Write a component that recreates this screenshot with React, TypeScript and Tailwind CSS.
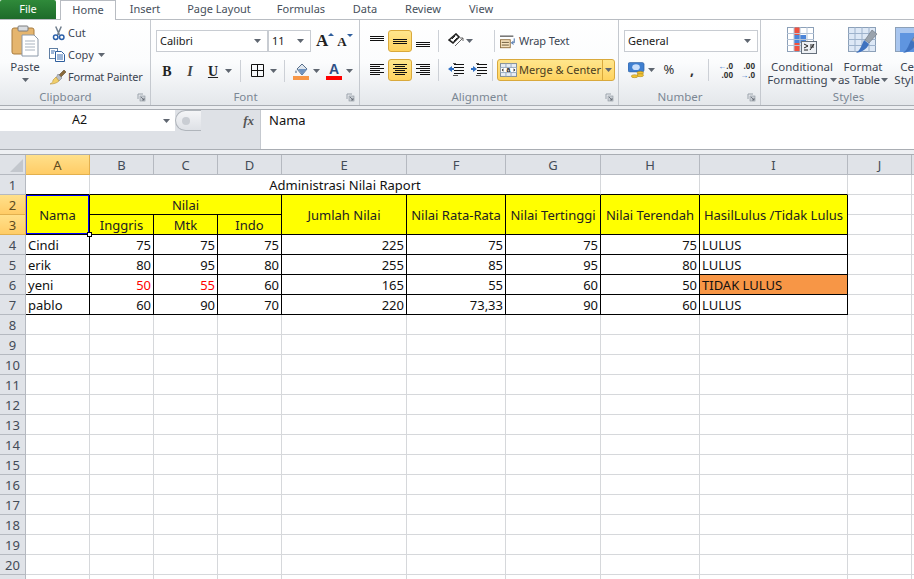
import type { ReactNode } from 'react';

const tabs = [
  { label: 'Insert', w: 'w-[58px]' },
  { label: 'Page Layout', w: 'w-[90px]' },
  { label: 'Formulas', w: 'w-[74px]' },
  { label: 'Data', w: 'w-[54px]' },
  { label: 'Review', w: 'w-[62px]' },
  { label: 'View', w: 'w-[54px]' },
];

const colHeaders = [
  { label: 'A', active: true },
  { label: 'B' },
  { label: 'C' },
  { label: 'D' },
  { label: 'E' },
  { label: 'F' },
  { label: 'G' },
  { label: 'H' },
  { label: 'I' },
  { label: 'J' },
  { label: '' },
];

const students = [
  { n: 4, name: 'Cindi', b: '75', c: '75', d: '75', e: '225', f: '75', g: '75', h: '75', i: 'LULUS' },
  { n: 5, name: 'erik', b: '80', c: '95', d: '80', e: '255', f: '85', g: '95', h: '80', i: 'LULUS' },
  { n: 6, name: 'yeni', b: '50', c: '55', d: '60', e: '165', f: '55', g: '60', h: '50', i: 'TIDAK LULUS', fail: true },
  { n: 7, name: 'pablo', b: '60', c: '90', d: '70', e: '220', f: '73,33', g: '90', h: '60', i: 'LULUS' },
];

const emptyRows = [8, 9, 10, 11, 12, 13, 14, 15, 16, 17, 18, 19, 20, 21];
const emptyCols = [0, 1, 2, 3, 4, 5, 6, 7, 8, 9, 10];

const Caret = ({ className = '' }: { className?: string }) => (
  <svg width="7" height="4" viewBox="0 0 7 4" className={`shrink-0 ${className}`}>
    <path d="M0 0h7L3.5 4z" fill="#5f6670" />
  </svg>
);

const Launcher = () => (
  <svg width="9" height="9" viewBox="0 0 9 9" className="absolute right-[4px] bottom-[3px]">
    <path d="M1 1h5M1 1v5" stroke="#9aa2ab" fill="none" />
    <rect x="3" y="3" width="5" height="5" fill="#c9ced4" stroke="#8b939c" strokeWidth="0.6" />
    <path d="M4 4l3 3M7 5v2H5" stroke="#5f6670" fill="none" strokeWidth="0.8" />
  </svg>
);

const Sep = () => <div className="w-px h-[22px] bg-[#ccd0d6] shrink-0" />;

const Group = ({ label, w, children }: { label: string; w: string; children: ReactNode }) => (
  <div className={`relative shrink-0 h-full flex flex-col border-r border-[#c5c9cf] ${w}`}>
    <div className="flex-1 min-h-0">{children}</div>
    <div
      className={`h-[15px] text-center text-[11.5px] leading-[14px] text-[#7b8794] ${
        label === 'Styles' ? 'pl-[22px]' : 'pr-[19px]'
      }`}
    >
      {label}
    </div>
    {label !== 'Styles' ? <Launcher /> : null}
  </div>
);

const Combo = ({ w, label }: { w: string; label: string }) => (
  <div className={`h-[22px] bg-white border border-[#c8ccd2] flex items-center justify-between pl-[3px] pr-[6px] text-[11px] text-[#1a1a1a] ${w}`}>
    <span>{label}</span>
    <Caret />
  </div>
);

type Align = 'top' | 'mid' | 'bot' | 'left' | 'center' | 'right';

const Lines = ({ kind }: { kind: Align }) => {
  if (kind === 'top' || kind === 'mid' || kind === 'bot') {
    const y = kind === 'top' ? 2 : kind === 'mid' ? 5 : 8;
    return (
      <svg width="15" height="14" viewBox="0 0 15 14">
        <path d={`M0 ${y + 0.5}h14M0 ${y + 2.5}h14M0 ${y + 4.5}h14`} stroke="#111" fill="none" />
      </svg>
    );
  }
  const d =
    kind === 'left'
      ? 'M0 1.5h14M0 3.5h10M0 5.5h14M0 7.5h10M0 9.5h14M0 11.5h10'
      : kind === 'center'
        ? 'M0 1.5h14M2 3.5h10M0 5.5h14M2 7.5h10M0 9.5h14M2 11.5h10'
        : 'M0 1.5h14M4 3.5h10M0 5.5h14M4 7.5h10M0 9.5h14M4 11.5h10';
  return (
    <svg width="15" height="14" viewBox="0 0 15 14">
      <path d={d} stroke="#111" fill="none" />
    </svg>
  );
};

const AlignBtn = ({ kind, on }: { kind: Align; on?: boolean }) => (
  <div
    className={`h-[22px] flex items-center justify-center rounded-[3px] ${
      on ? 'w-[24px] bg-gradient-to-b from-[#ffe68c] to-[#ffd35f] border border-[#d9a93c]' : 'w-[22px]'
    }`}
  >
    <Lines kind={kind} />
  </div>
);

const ClipboardIcon = () => (
  <svg width="28" height="32" viewBox="0 0 28 32">
    <rect x="1" y="3" width="22" height="26" rx="2" fill="#e5b56e" stroke="#a97c3e" />
    <rect x="7" y="1" width="10" height="5" rx="1" fill="#d9dce0" stroke="#7d7d7d" />
    <path d="M11 10h12l4 4v17H11z" fill="#fff" stroke="#8b98a8" />
    <path d="M14 16h10M14 19h10M14 22h10M14 25h10" stroke="#a9b3bf" />
  </svg>
);

const ScissorsIcon = () => (
  <svg width="13" height="16" viewBox="0 0 14 16">
    <path d="M4 1l4 9M10 1L6 10" stroke="#6f7d8c" strokeWidth="1.6" fill="none" />
    <circle cx="4" cy="12.5" r="2.4" fill="none" stroke="#2a5fa8" strokeWidth="1.6" />
    <circle cx="10.5" cy="12.5" r="2.4" fill="none" stroke="#2a5fa8" strokeWidth="1.6" />
  </svg>
);

const CopyIcon = () => (
  <svg width="16" height="14" viewBox="0 0 16 14">
    <rect x="0.5" y="0.5" width="8" height="10" fill="#fff" stroke="#5f7ea3" />
    <path d="M6.5 3.5h6l3 3v7h-9z" fill="#fff" stroke="#2f5f9e" />
    <path d="M8 7h6M8 9h6M8 11h6M2 3h4M2 5h3" stroke="#3a6cb0" />
  </svg>
);

const BrushIcon = () => (
  <svg width="18" height="16" viewBox="0 0 18 16">
    <path d="M10 6l5-5 2 2-5 5z" fill="#8a6a3a" stroke="#5b4a2e" strokeWidth="0.6" />
    <path d="M9 5l4 4-3 3-3-3z" fill="#b9bec5" stroke="#7b8088" strokeWidth="0.6" />
    <path d="M7 8l3 4c-2 2-5 3-9 3 2-1 3-2 3-4z" fill="#f1cf6a" stroke="#b8923a" strokeWidth="0.6" />
  </svg>
);

const BorderIcon = () => (
  <svg width="14" height="14" viewBox="0 0 14 14">
    <path d="M.5.5h12v12H.5zM6.5.5v12M.5 6.5h12" fill="none" stroke="#111" />
  </svg>
);

const FillIcon = () => (
  <svg width="16" height="17" viewBox="0 0 16 17">
    <path d="M4 6l5-5 5 5-5 6z" fill="#dfe6ee" stroke="#58708c" />
    <path d="M5 6h9l-5 6z" fill="#6f93c0" />
    <path d="M3 7c-1 2-1 3 0 3s1-1 0-3z" fill="#58708c" />
    <rect x="0" y="13" width="16" height="4" fill="#f79646" />
  </svg>
);

const OrientIcon = () => (
  <svg width="17" height="16" viewBox="0 0 17 16">
    <path d="M1 7l7-6 3 3-6 6z" fill="none" stroke="#222" strokeWidth="1.6" />
    <path d="M4 6l3-3M6 8l3-3" stroke="#222" />
    <path d="M7 13l8-8M12 5h3v3" stroke="#666" fill="none" />
  </svg>
);

const IndentIcon = ({ dir }: { dir: 'dec' | 'inc' }) => (
  <svg width="16" height="14" viewBox="0 0 16 14">
    <path d="M6 1.5h10M6 4.5h10M6 7.5h10M6 10.5h10" stroke="#111" />
    <path d="M5 12.5h5M5 0.5h3" stroke="#555" />
    {dir === 'dec' ? (
      <path d="M0 6l4-3v2h2v2H4v2z" fill="#2f6fc4" />
    ) : (
      <path d="M6 6L2 3v2H0v2h2v2z" fill="#2f6fc4" />
    )}
  </svg>
);

const WrapIcon = () => (
  <svg width="16" height="15" viewBox="0 0 18 15">
    <rect x="0.5" y="5.5" width="11" height="9" fill="#f7e3bf" stroke="#8a6a3a" />
    <path d="M2 8.5h8M2 11.5h8" stroke="#5b4a2e" />
    <path d="M0 1.5h15" stroke="#555" strokeWidth="1.4" />
    <path d="M16 4v5h-3M15 7l-2 2 2 2" stroke="#2f5f9e" fill="none" />
  </svg>
);

const MergeIcon = () => (
  <svg width="17" height="16" viewBox="0 0 20 16">
    <rect x="0.5" y="0.5" width="19" height="15" fill="#e8eef5" stroke="#6f8096" />
    <rect x="1" y="5" width="18" height="6" fill="#fff" />
    <path d="M0 5h20M0 11h20M7 0v5M13 0v5M7 11v5M13 11v5" stroke="#8ca0b8" />
    <text x="10" y="10.5" fontSize="8" textAnchor="middle" fill="#222" fontFamily="Liberation Sans, sans-serif" fontWeight="700">a</text>
    <path d="M2 8l2-2v4zM18 8l-2-2v4z" fill="#222" />
  </svg>
);

const MoneyIcon = () => (
  <svg width="17" height="17" viewBox="0 0 18 17">
    <rect x="0" y="0" width="17" height="10" rx="2" fill="#3f7fd0" stroke="#2a5a9a" strokeWidth="0.6" />
    <ellipse cx="8.5" cy="5" rx="4" ry="3" fill="#c9defa" />
    <ellipse cx="13" cy="11" rx="3.5" ry="1.6" fill="#f2c230" stroke="#9a7a18" strokeWidth="0.5" />
    <ellipse cx="13" cy="13.5" rx="3.5" ry="1.6" fill="#f2c230" stroke="#9a7a18" strokeWidth="0.5" />
    <ellipse cx="7" cy="14.5" rx="3.5" ry="1.6" fill="#f2c230" stroke="#9a7a18" strokeWidth="0.5" />
  </svg>
);

const CondIcon = () => (
  <svg width="30" height="27" viewBox="0 0 30 27">
    <rect x="0.5" y="0.5" width="26" height="24" fill="#fff" stroke="#8ca0b8" />
    <rect x="7" y="0.5" width="6" height="8" fill="#f0513f" />
    <rect x="7" y="8" width="12" height="8" fill="#4c85d8" />
    <rect x="7" y="16" width="6" height="8" fill="#f0513f" />
    <path d="M7 0v25M13 0v25M20 0v25M0 6.5h27M0 12.5h27M0 18.5h27" stroke="#b4c3d6" fill="none" />
    <rect x="14.5" y="14.5" width="15" height="12" fill="#eef1f5" stroke="#66707c" />
    <path d="M17 17l4 2-4 2M17 23h4M23 18h4M23 20h4M23 23l4-6" stroke="#222" fill="none" />
  </svg>
);

const TableIcon = ({ fill }: { fill?: boolean }) => (
  <svg width="30" height="27" viewBox="0 0 30 27">
    <rect x="0.5" y="0.5" width="27" height="24" fill={fill ? '#a9c6ef' : '#dde8f6'} stroke="#8ca0b8" />
    {fill ? <rect x="5" y="6" width="23" height="19" fill="#5f95e0" /> : null}
    {fill ? null : <path d="M7 0v25M14 0v25M21 0v25M0 6.5h28M0 12.5h28M0 18.5h28" stroke="#9db2cc" fill="none" />}
    <path d="M24 3l5 4-8 9-4-3z" fill="#9aa3ad" stroke="#6b747e" strokeWidth="0.6" />
    <path d="M16 13l5 4c-2 5-7 8-13 9 4-3 5-6 8-13z" fill="#3f72bf" />
  </svg>
);

const Plain = ({ children, className = '' }: { children?: ReactNode; className?: string }) => (
  <div className={`border-r border-b border-[#d6d8db] flex items-center ${className}`}>{children}</div>
);

// black box cells, text is pushed 1px down like the sheet
const Box = ({ children, className = '' }: { children?: ReactNode; className?: string }) => (
  <div className={`border-r border-b border-black flex items-center pt-[2px] ${className}`}>{children}</div>
);

const Head = ({ children, className = '' }: { children: ReactNode; className?: string }) => (
  <Box className={`bg-[#ffff00] justify-center text-[#222] ${className}`}>{children}</Box>
);

const Num = ({ children, red }: { children: ReactNode; red?: boolean }) => (
  <Box className={`justify-end pr-[2px] ${red ? 'text-[#ff0000]' : 'text-[#111]'}`}>{children}</Box>
);

const RowHead = ({ n, active }: { n: number; active?: boolean }) => (
  <div
    className={`border-r border-b flex items-center justify-center pt-[2px] text-[13px] ${
      active
        ? 'bg-gradient-to-b from-[#ffe08a] to-[#ffcc66] border-[#e2b04e] text-[#5c4a20]'
        : 'bg-[#e0e3e8] border-[#b5b9c0] text-[#444c57]'
    }`}
  >
    {n}
  </div>
);

export default function App() {
  return (
    <div className="w-[914px] h-[579px] overflow-hidden bg-white flex flex-col font-['Noto_Sans','Open_Sans',sans-serif]">
      {/* tabs */}
      <div className="h-[20px] shrink-0 flex items-start border-b border-[#b8bcc2] bg-white text-[11px] text-[#47505b]">
        <div className="w-[56px] h-[19px] bg-gradient-to-b from-[#2f8a3a] to-[#1d6b2a] text-white flex items-center justify-center rounded-t-[2px]">
          File
        </div>
        <div className="ml-[4px] w-[56px] h-[20px] bg-white border border-b-0 border-[#b8bcc2] flex items-center justify-center">
          Home
        </div>
        {tabs.map((t) => (
          <div key={t.label} className={`h-[19px] flex items-center justify-center ${t.w}`}>
            {t.label}
          </div>
        ))}
      </div>

      {/* ribbon */}
      <div className="h-[86px] shrink-0 flex bg-gradient-to-b from-white via-[#fbfcfd] to-[#e4e7eb] border-b border-[#a9adb3] text-[11px] text-[#3c4552]">
        <Group label="Clipboard" w="w-[151px]">
          <div className="flex h-full">
            <div className="w-[50px] flex flex-col items-center pt-[5px]">
              <ClipboardIcon />
              <div className="mt-[2px] leading-[15px] text-[11.5px]">Paste</div>
              <Caret className="mt-[4px]" />
            </div>
            <div className="flex flex-col pt-[5px] gap-[6px]">
              <div className="h-[16px] flex items-center gap-[3px] pl-[2px]">
                <ScissorsIcon />
                <span>Cut</span>
              </div>
              <div className="h-[16px] flex items-center gap-[3px] -ml-[1px]">
                <CopyIcon />
                <span>Copy</span>
                <Caret className="ml-[1px]" />
              </div>
              <div className="h-[16px] flex items-center gap-[1px] -ml-[1px]">
                <BrushIcon />
                <span className="tracking-[-0.2px] whitespace-nowrap">Format Painter</span>
              </div>
            </div>
          </div>
        </Group>

        <Group label="Font" w="w-[209px]">
          <div className="pl-[5px] pt-[10px]">
            <div className="flex items-center">
              <Combo w="w-[112px]" label="Calibri" />
              <Combo w="w-[43px]" label="11" />
              <div className="ml-[5px] flex items-end gap-[9px] font-['Liberation_Serif',serif] font-bold text-[#222]">
                <span className="relative text-[17px] leading-[18px]">
                  A
                  <span className="absolute -right-[6px] top-[1px] w-0 h-0 border-x-[3px] border-x-transparent border-b-[3px] border-b-[#2f5f9e]" />
                </span>
                <span className="relative text-[13px] leading-[16px]">
                  A
                  <span className="absolute -right-[6px] top-0 w-0 h-0 border-x-[3px] border-x-transparent border-t-[3px] border-t-[#2f5f9e]" />
                </span>
              </div>
            </div>
            <div className="mt-[8px] h-[22px] flex items-center pl-[5px] font-['Liberation_Serif',serif] text-[#222]">
              <span className="w-[12px] text-center text-[14px] font-bold">B</span>
              <span className="ml-[11px] w-[12px] text-center text-[14px] italic font-bold text-[#444]">I</span>
              <span className="ml-[11px] w-[12px] text-center text-[14px] font-bold underline">U</span>
              <Caret className="ml-[6px]" />
              <div className="ml-[8px]"><Sep /></div>
              <div className="ml-[10px]"><BorderIcon /></div>
              <Caret className="ml-[5px]" />
              <div className="ml-[7px]"><Sep /></div>
              <div className="ml-[8px]"><FillIcon /></div>
              <Caret className="ml-[4px]" />
              <div className="ml-[6px] w-[16px] flex flex-col items-center">
                <span className="font-['Liberation_Sans',sans-serif] text-[14px] leading-[13px] font-bold text-[#2f4f86]">A</span>
                <div className="w-[16px] h-[4px] bg-[#ff0000]" />
              </div>
              <Caret className="ml-[4px]" />
            </div>
          </div>
        </Group>

        <Group label="Alignment" w="w-[259px]">
          <div className="pl-[6px] pt-[10px] flex flex-col gap-[7px]">
            <div className="flex items-center h-[22px]">
              <AlignBtn kind="top" />
              <AlignBtn kind="mid" on />
              <AlignBtn kind="bot" />
              <div className="ml-[4px]"><Sep /></div>
              <div className="ml-[9px]"><OrientIcon /></div>
              <Caret className="ml-[1px]" />
              <div className="ml-[21px]"><Sep /></div>
              <div className="ml-[5px] flex items-center gap-[3px]">
                <WrapIcon />
                <span className="whitespace-nowrap tracking-[-0.1px]">Wrap Text</span>
              </div>
            </div>
            <div className="flex items-center h-[22px]">
              <AlignBtn kind="left" />
              <AlignBtn kind="center" on />
              <AlignBtn kind="right" />
              <div className="ml-[4px]"><Sep /></div>
              <div className="ml-[9px]"><IndentIcon dir="dec" /></div>
              <div className="ml-[7px]"><IndentIcon dir="inc" /></div>
              <div className="ml-[5px]"><Sep /></div>
              <div className="ml-[4px] w-[118px] h-[22px] flex items-center rounded-[3px] bg-gradient-to-b from-[#ffe68c] to-[#ffd35f] border border-[#d9a93c] text-[#4a3c20]">
                <div className="ml-[2px]"><MergeIcon /></div>
                <span className="ml-[2px] whitespace-nowrap">Merge &amp; Center</span>
                <div className="ml-auto h-full w-[12px] border-l border-[#d9a93c] flex items-center justify-center">
                  <Caret />
                </div>
              </div>
            </div>
          </div>
        </Group>

        <Group label="Number" w="w-[142px]">
          <div className="pl-[5px] pt-[10px]">
            <Combo w="w-[134px]" label="General" />
            <div className="mt-[7px] h-[22px] flex items-center pl-[4px] text-[#333]">
              <MoneyIcon />
              <Caret className="ml-[3px]" />
              <span className="ml-[7px] w-[14px] text-center text-[13px]">%</span>
              <span className="ml-[11px] w-[10px] text-center text-[14px] font-bold leading-[12px]">,</span>
              <div className="ml-[11px]"><Sep /></div>
              <div className="ml-[8px] w-[16px] flex flex-col text-[8px] leading-[9px] font-bold text-right text-[#333]">
                <span><span className="text-[#2f6fc4]">←</span>.0</span>
                <span>.00</span>
              </div>
              <div className="ml-[6px] w-[16px] flex flex-col text-[8px] leading-[9px] font-bold text-right text-[#333]">
                <span>.00</span>
                <span><span className="text-[#2f6fc4]">→</span>.0</span>
              </div>
            </div>
          </div>
        </Group>

        <Group label="Styles" w="w-[153px] border-r-0">
          <div className="flex pt-[7px] pl-[8px] text-[11.5px] leading-[13px]">
            <div className="w-[66px] shrink-0 flex flex-col items-center">
              <CondIcon />
              <div className="mt-[6px] text-center whitespace-nowrap">Conditional</div>
              <div className="flex items-center gap-[2px] whitespace-nowrap">Formatting<Caret /></div>
            </div>
            <div className="ml-[3px] w-[50px] shrink-0 flex flex-col items-center">
              <TableIcon />
              <div className="mt-[6px] text-center whitespace-nowrap">Format</div>
              <div className="flex items-center gap-[1px] whitespace-nowrap tracking-[-0.2px]">as Table<Caret /></div>
            </div>
            <div className="ml-[7px] w-[30px] shrink-0 flex flex-col items-center">
              <TableIcon fill />
              <div className="mt-[6px] text-center whitespace-nowrap">Cell</div>
              <div className="whitespace-nowrap">Styles</div>
            </div>
          </div>
        </Group>
      </div>

      {/* formula bar */}
      <div className="h-[3px] shrink-0 bg-[#eceef1]" />
      <div className="h-[41px] shrink-0 flex border-y border-[#a9adb3] bg-[#dee1e6]">
        <div className="w-[261px] shrink-0 border-r border-[#c5c9cf]">
          <div className="h-[21px] flex items-center">
            <div className="w-[175px] h-full bg-white flex items-center justify-center relative text-[12.5px] text-[#111]">
              <span className="mr-[16px]">A2</span>
              <Caret className="absolute right-[5px] top-[9px]" />
            </div>
            <div className="w-[26px] h-[21px] rounded-l-full bg-gradient-to-b from-[#f4f5f7] to-[#dee1e6] border border-r-0 border-[#b0b5bb] flex items-center pl-[6px]">
              <span className="w-[8px] h-[8px] rounded-full bg-[#c9cdd3]" />
            </div>
            <span className="ml-auto mr-[6px] font-['Liberation_Serif',serif] italic font-bold text-[13px] text-[#555]">
              fx
            </span>
          </div>
        </div>
        <div className="flex-1 bg-white pl-[8px] h-full text-[13px] leading-[21px] text-[#111]">Nama</div>
      </div>
      <div className="h-[5px] shrink-0 bg-[#eef0f3] border-b border-[#a9adb3]" />

      {/* sheet */}
      <div className="grid flex-1 min-h-0 grid-cols-[26px_64px_64px_64px_64px_125px_99px_95px_99px_148px_64px_64px] auto-rows-[20px] text-[13px] leading-none text-[#222]">
        <div className="bg-[#dfe2e7] border-r border-b border-[#b5b9c0] flex items-end justify-end p-[2px]">
          <div className="w-0 h-0 border-l-[13px] border-l-transparent border-b-[13px] border-b-[#c3c7cd]" />
        </div>
        {colHeaders.map((c, i) => (
          <div
            key={i}
            className={`border-r border-b flex items-center justify-center pt-[1px] ${
              c.active
                ? 'bg-gradient-to-b from-[#ffe08a] to-[#ffcc66] border-[#e2b04e] text-[#5c4a20]'
                : 'bg-[#e0e3e8] border-[#b5b9c0] text-[#444c57]'
            }`}
          >
            {c.label}
          </div>
        ))}

        {/* row 1: title is merged over B to G */}
        <RowHead n={1} />
        <div className="border-r border-b border-r-[#d6d8db] border-b-black" />
        <div className="col-span-6 border-r border-b border-r-[#d6d8db] border-b-black flex items-center justify-center pt-[2px] text-[#111]">
          Administrasi Nilai Raport
        </div>
        <div className="border-r border-b border-r-[#d6d8db] border-b-black" />
        <div className="border-r border-b border-r-[#d6d8db] border-b-black" />
        <Plain />
        <Plain />

        {/* rows 2 and 3 */}
        <RowHead n={2} active />
        <div className="row-span-2 relative bg-[#ffff00] border-r border-b border-black flex items-center justify-center pt-[2px] text-[#222]">
          Nama
          <div className="absolute left-0 top-0 right-0 bottom-0 border border-[#0000ff]" />
          <div className="absolute -right-[3px] -bottom-[3px] w-[5px] h-[5px] bg-white border border-black z-10" />
        </div>
        <Head className="col-span-3">Nilai</Head>
        <Head className="row-span-2">Jumlah Nilai</Head>
        <Head className="row-span-2 whitespace-nowrap">Nilai Rata-Rata</Head>
        <Head className="row-span-2 whitespace-nowrap">Nilai Tertinggi</Head>
        <Head className="row-span-2 whitespace-nowrap">Nilai Terendah</Head>
        <Head className="row-span-2 whitespace-nowrap">HasilLulus /Tidak Lulus</Head>
        <Plain />
        <Plain />
        <RowHead n={3} active />
        <Head>Inggris</Head>
        <Head>Mtk</Head>
        <Head>Indo</Head>
        <Plain />
        <Plain />

        {/* data */}
        {students.map((s) => (
          <div key={s.n} className="contents">
            <RowHead n={s.n} />
            <Box className="pl-[2px] text-[#111]">{s.name}</Box>
            <Num red={s.fail}>{s.b}</Num>
            <Num red={s.fail}>{s.c}</Num>
            <Num>{s.d}</Num>
            <Num>{s.e}</Num>
            <Num>{s.f}</Num>
            <Num>{s.g}</Num>
            <Num>{s.h}</Num>
            <Box className={`pl-[2px] text-[#111] ${s.fail ? 'bg-[#f79646]' : ''}`}>{s.i}</Box>
            <Plain />
            <Plain />
          </div>
        ))}

        {/* empty */}
        {emptyRows.map((n) => (
          <div key={n} className="contents">
            <RowHead n={n} />
            {emptyCols.map((c) => (
              <Plain key={c} />
            ))}
          </div>
        ))}
      </div>
    </div>
  );
}
